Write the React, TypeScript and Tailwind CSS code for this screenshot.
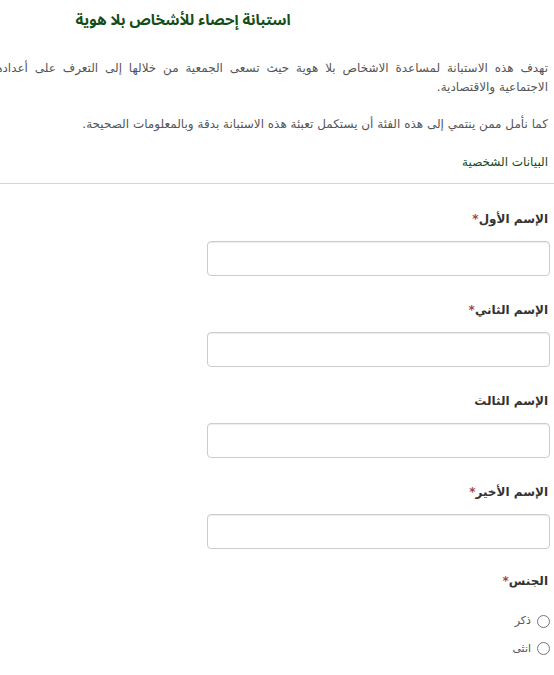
import React from "react";

const fields = [
  { label: "الإسم الأول", required: true },
  { label: "الإسم الثاني", required: true },
  { label: "الإسم الثالث", required: false },
  { label: "الإسم الأخير", required: true },
];

export default function App() {
  return (
    <div
      dir="rtl"
      className="w-[554px] h-[675px] overflow-hidden bg-white text-[#555] font-['DejaVu_Sans',sans-serif]"
    >
      <div className="w-[736px] pr-[6px]">
        <h1 className="pt-[8px] text-center text-[15px] font-bold leading-[24px] text-[#134d17] font-['Noto_Sans_Arabic','DejaVu_Sans',sans-serif]">
          استبانة إحصاء للأشخاص بلا هوية
        </h1>

        {/* first line runs past the left edge of the window, as in the page */}
        <p className="mt-[27px] text-[12px] leading-[19px]">
          <span className="block whitespace-nowrap [word-spacing:3px]">
            تهدف هذه الاستبانة لمساعدة الاشخاص بلا هوية حيث تسعى الجمعية من خلالها إلى التعرف على أعدادهم وأوضاعهم واحتياجاتهم
          </span>
          <span className="block">الاجتماعية والاقتصادية.</span>
        </p>
        <p className="mt-[18px] text-[12px] leading-[19px]">
          كما نأمل ممن ينتمي إلى هذه الفئة أن يستكمل تعبئة هذه الاستبانة بدقة وبالمعلومات الصحيحة.
        </p>

        <h2 className="mt-[19px] text-[12px] leading-[19px] text-[#134d17]">البيانات الشخصية</h2>
      </div>

      <hr className="mt-[11px] border-[#d5d5d5]" />

      <div className="pr-[4px] pt-[26px]">
        {fields.map((f) => (
          <div key={f.label} className="mb-[25px]">
            <label className="block pr-[2px] text-[12px] font-bold leading-[19px] text-[#333]">
              {f.label}
              {f.required && <span className="text-[#a94442]">*</span>}
            </label>
            <input
              type="text"
              className="mt-[12px] block h-[35px] w-[343px] rounded-[4px] border border-[#ccc] bg-white shadow-[inset_0_1px_1px_rgba(0,0,0,0.075)]"
            />
          </div>
        ))}

        <div className="-mt-[2px]">
          <div className="pr-[2px] text-[12px] font-bold leading-[19px] text-[#333]">
            الجنس<span className="text-[#a94442]">*</span>
          </div>
          <div className="mt-[22px] flex flex-col gap-[11px] text-[11px] text-[#555]">
            <label className="flex items-center gap-[6px]">
              <input type="radio" name="g" className="m-0 h-[13px] w-[13px]" />
              ذكر
            </label>
            <label className="flex items-center gap-[6px]">
              <input type="radio" name="g" className="m-0 h-[13px] w-[13px]" />
              انثى
            </label>
          </div>
        </div>
      </div>
    </div>
  );
}
